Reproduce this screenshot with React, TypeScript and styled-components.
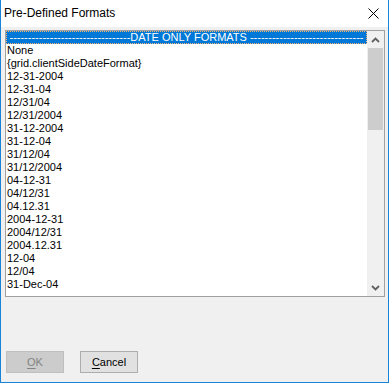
import React from "react";
import styled, { createGlobalStyle } from "styled-components";

const GlobalStyle = createGlobalStyle`
  html, body {
    margin: 0;
    padding: 0;
    background: #f0f0f0;
  }
  * {
    box-sizing: border-box;
  }
`;

const formats = [
  "None",
  "{grid.clientSideDateFormat}",
  "12-31-2004",
  "12-31-04",
  "12/31/04",
  "12/31/2004",
  "31-12-2004",
  "31-12-04",
  "31/12/04",
  "31/12/2004",
  "04-12-31",
  "04/12/31",
  "04.12.31",
  "2004-12-31",
  "2004/12/31",
  "2004.12.31",
  "12-04",
  "12/04",
  "31-Dec-04",
];

const Window = styled.div`
  width: 389px;
  height: 383px;
  display: flex;
  flex-direction: column;
  background: #f0f0f0;
  border: 1px solid #1883d7;
  border-top: none;
  font-family: "Liberation Sans", Arial, sans-serif;
`;

const TitleBar = styled.div`
  height: 27px;
  flex: none;
  display: flex;
  align-items: center;
  justify-content: space-between;
  padding: 0 9px 1px 3px;
  background: #fff;
`;

const Title = styled.span`
  font-size: 12px;
  color: #000;
`;

const Client = styled.div`
  flex: 1;
  display: flex;
  flex-direction: column;
  padding: 3px 3px 9px 4px;
`;

const ListBox = styled.div`
  height: 267px;
  display: flex;
  border: 1px solid #a0a0a0;
  background: #fff;
`;

const Items = styled.div`
  flex: 1;
  overflow: hidden;
  display: flex;
  flex-direction: column;
`;

const Item = styled.div<{ $selected?: boolean }>`
  height: 13px;
  flex: none;
  padding-left: 1px;
  font-size: 11px;
  line-height: 13px;
  white-space: nowrap;
  color: ${(p) => (p.$selected ? "#fff" : "#000")};
  background: ${(p) => (p.$selected ? "#0078d7" : "transparent")};
  ${(p) => (p.$selected ? "outline: 1px dotted #f2b47a; outline-offset: -1px;" : "")}
`;

const Header = styled(Item)`
  display: flex;
  justify-content: center;
  padding-left: 0;
`;

const ScrollBar = styled.div`
  width: 17px;
  flex: none;
  display: flex;
  flex-direction: column;
  background: #f0f0f0;
`;

const ArrowButton = styled.div`
  height: 17px;
  flex: none;
  display: flex;
  align-items: center;
  justify-content: center;
`;

const Thumb = styled.div`
  height: 82px;
  margin: 0 1px;
  background: #cdcdcd;
`;

const Spacer = styled.div`
  flex: 1;
`;

const ButtonRow = styled.div`
  margin-top: auto;
  display: flex;
  gap: 16px;
  padding-left: 1px;
`;

const Button = styled.button<{ $disabled?: boolean }>`
  width: 58px;
  height: 22px;
  padding: 0;
  font-family: "Liberation Sans", Arial, sans-serif;
  font-size: 11px;
  color: ${(p) => (p.$disabled ? "#838383" : "#000")};
  background: ${(p) => (p.$disabled ? "#cccccc" : "#e1e1e1")};
  border: 1px solid ${(p) => (p.$disabled ? "#bfbfbf" : "#adadad")};
  cursor: default;

  u {
    text-underline-offset: 2px;
  }
`;

const Chevron = ({ up }: { up?: boolean }) => (
  <svg width="9" height="6" viewBox="0 0 9 6">
    <path
      d={up ? "M1 5 L4.5 1.5 L8 5" : "M1 1 L4.5 4.5 L8 1"}
      fill="none"
      stroke="#606060"
      strokeWidth="1.8"
    />
  </svg>
);

const CloseIcon = () => (
  <svg width="11" height="11" viewBox="0 0 11 11">
    <path d="M0.5 0.5 L10.5 10.5 M10.5 0.5 L0.5 10.5" stroke="#000" strokeWidth="1" />
  </svg>
);

const dashes = (n: number) => "-".repeat(n);

export default function App() {
  return (
    <>
      <GlobalStyle />
      <Window>
        <TitleBar>
          <Title>Pre-Defined Formats</Title>
          <CloseIcon />
        </TitleBar>
        <Client>
          <ListBox>
            <Items>
              <Header $selected>
                {dashes(33)}DATE ONLY FORMATS {dashes(31)}
              </Header>
              {formats.map((f) => (
                <Item key={f}>{f}</Item>
              ))}
            </Items>
            <ScrollBar>
              <ArrowButton>
                <Chevron up />
              </ArrowButton>
              <Thumb />
              <Spacer />
              <ArrowButton>
                <Chevron />
              </ArrowButton>
            </ScrollBar>
          </ListBox>
          <ButtonRow>
            <Button $disabled>
              <u>O</u>K
            </Button>
            <Button>
              <u>C</u>ancel
            </Button>
          </ButtonRow>
        </Client>
      </Window>
    </>
  );
}
